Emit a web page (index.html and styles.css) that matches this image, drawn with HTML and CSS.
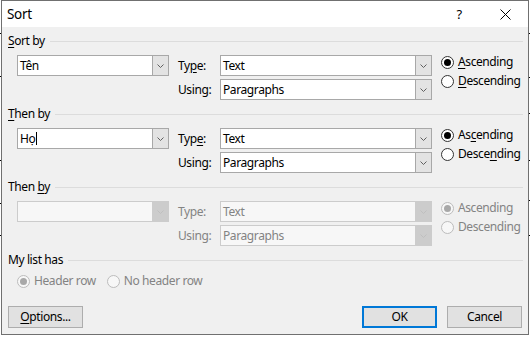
FILE: index.html
```html
<!DOCTYPE html>
<html lang="en">
<head>
<meta charset="utf-8">
<title>Sort</title>
<link rel="stylesheet" href="styles.css">
</head>
<body>
<div class="dialog">
  <div class="titlebar">
    <span class="title">Sort</span>
    <span class="cap-btn help">?</span>
    <span class="cap-btn close">
      <svg width="11" height="11" viewBox="0 0 11 11"><path d="M0.5 0.5 L10.5 10.5 M10.5 0.5 L0.5 10.5" stroke="#000" stroke-width="1" fill="none"/></svg>
    </span>
  </div>
  <div class="body">
    <section class="group">
      <div class="group-head"><span><u>S</u>ort by</span><i class="rule"></i></div>
      <div class="group-row">
        <div class="combo key"><span class="val">Tên</span><span class="drop"><svg width="7" height="4" viewBox="0 0 7 4"><path d="M0.5 0.5 L3.5 3.5 L6.5 0.5" fill="none" stroke="#606060"/></svg></span></div>
        <span class="lbl r1">Ty<u>p</u>e:</span>
        <div class="combo c1"><span class="val">Text</span><span class="drop"><svg width="7" height="4" viewBox="0 0 7 4"><path d="M0.5 0.5 L3.5 3.5 L6.5 0.5" fill="none" stroke="#606060"/></svg></span></div>
        <span class="lbl r2">Using:</span>
        <div class="combo c2"><span class="val">Paragraphs</span><span class="drop"><svg width="7" height="4" viewBox="0 0 7 4"><path d="M0.5 0.5 L3.5 3.5 L6.5 0.5" fill="none" stroke="#606060"/></svg></span></div>
        <div class="radios">
          <label class="radio"><span class="dot on"></span><span><u>A</u>scending</span></label>
          <label class="radio"><span class="dot"></span><span><u>D</u>escending</span></label>
        </div>
      </div>
    </section>
    <section class="group">
      <div class="group-head"><span><u>T</u>hen by</span><i class="rule"></i></div>
      <div class="group-row">
        <div class="combo key"><span class="val">Họ<i class="caret"></i></span><span class="drop"><svg width="7" height="4" viewBox="0 0 7 4"><path d="M0.5 0.5 L3.5 3.5 L6.5 0.5" fill="none" stroke="#606060"/></svg></span></div>
        <span class="lbl r1">Typ<u>e</u>:</span>
        <div class="combo c1"><span class="val">Text</span><span class="drop"><svg width="7" height="4" viewBox="0 0 7 4"><path d="M0.5 0.5 L3.5 3.5 L6.5 0.5" fill="none" stroke="#606060"/></svg></span></div>
        <span class="lbl r2">Using:</span>
        <div class="combo c2"><span class="val">Paragraphs</span><span class="drop"><svg width="7" height="4" viewBox="0 0 7 4"><path d="M0.5 0.5 L3.5 3.5 L6.5 0.5" fill="none" stroke="#606060"/></svg></span></div>
        <div class="radios">
          <label class="radio"><span class="dot on"></span><span>As<u>c</u>ending</span></label>
          <label class="radio"><span class="dot"></span><span>Desce<u>n</u>ding</span></label>
        </div>
      </div>
    </section>
    <section class="group disabled">
      <div class="group-head"><span class="head-on">Then <u>b</u>y</span><i class="rule"></i></div>
      <div class="group-row">
        <div class="combo key"><span class="val"></span><span class="drop"><svg width="7" height="4" viewBox="0 0 7 4"><path d="M0.5 0.5 L3.5 3.5 L6.5 0.5" fill="none" stroke="#bfbfbf"/></svg></span></div>
        <span class="lbl r1">Type:</span>
        <div class="combo c1"><span class="val">Text</span><span class="drop"><svg width="7" height="4" viewBox="0 0 7 4"><path d="M0.5 0.5 L3.5 3.5 L6.5 0.5" fill="none" stroke="#bfbfbf"/></svg></span></div>
        <span class="lbl r2">Using:</span>
        <div class="combo c2"><span class="val">Paragraphs</span><span class="drop"><svg width="7" height="4" viewBox="0 0 7 4"><path d="M0.5 0.5 L3.5 3.5 L6.5 0.5" fill="none" stroke="#bfbfbf"/></svg></span></div>
        <div class="radios">
          <label class="radio"><span class="dot on"></span><span>Ascending</span></label>
          <label class="radio"><span class="dot"></span><span>Descending</span></label>
        </div>
      </div>
    </section>
    <section class="listhas">
      <div class="group-head"><span>My list has</span><i class="rule"></i></div>
      <div class="hdr-radios disabled">
        <label class="radio"><span class="dot on"></span><span>Header row</span></label>
        <label class="radio"><span class="dot"></span><span>No header row</span></label>
      </div>
    </section>
    <div class="buttons">
      <button class="push"><u>O</u>ptions...</button>
      <span class="spacer"></span>
      <button class="push default">OK</button>
      <button class="push">Cancel</button>
    </div>
  </div>
</div>
<div class="marks">
  <i class="mk l1"></i><i class="mk l2"></i><i class="mk l3"></i><i class="mk l4"></i><i class="mk l5"></i>
  <i class="mk r1m"></i><i class="mk r2m"></i><i class="mk r3m"></i><i class="mk r4m"></i><i class="mk r5m"></i><i class="mk r6m"></i>
</div>
</body>
</html>
```
FILE: styles.css
```css
* { box-sizing: border-box; }
html, body { margin: 0; padding: 0; }
body {
  width: 530px;
  height: 339px;
  overflow: hidden;
  position: relative;
  background: #fff;
  font-family: "Noto Sans", "Segoe UI", sans-serif;
  font-size: 12px;
  letter-spacing: -0.4px;
  color: #000;
}
u { text-decoration-thickness: 1px; text-underline-offset: 2px; }

.dialog {
  margin-left: 1px;
  width: 528px;
  height: 335px;
  border: 1px solid #707070;
  background: #f0f0f0;
  display: flex;
  flex-direction: column;
}
.titlebar {
  height: 26px;
  flex: none;
  background: #fff;
  display: flex;
  align-items: center;
  padding-left: 5px;
}
.title { flex: 1; font-size: 13.5px; letter-spacing: -0.3px; }
.cap-btn {
  width: 46px;
  height: 26px;
  display: flex;
  align-items: center;
  justify-content: center;
}
.help { font-size: 13px; margin-right: 0; }
.close svg { display: block; }

.body {
  flex: 1;
  padding: 6px 5px 6px 6px;
  display: flex;
  flex-direction: column;
}
.group { padding-bottom: 6px; }
.group-head {
  height: 16px;
  display: flex;
  align-items: center;
  line-height: 16px;
}
.rule { flex: 1; height: 1px; background: #dcdcdc; margin-left: 5px; }

.group-row {
  margin-top: 6px;
  padding-left: 9px;
  display: grid;
  grid-template-columns: 152px 33px 212px auto;
  grid-template-rows: 21px 21px;
  column-gap: 9px;
  row-gap: 3px;
}
.key { grid-column: 1; grid-row: 1; }
.lbl { grid-column: 2; align-self: center; line-height: 16px; }
.lbl.r1 { grid-row: 1; }
.lbl.r2 { grid-row: 2; }
.c1 { grid-column: 3; grid-row: 1; }
.c2 { grid-column: 3; grid-row: 2; }
.radios {
  grid-column: 4;
  grid-row: 1 / span 2;
  display: flex;
  flex-direction: column;
  gap: 5px;
}

.combo {
  display: flex;
  height: 21px;
  border: 1px solid #a8a8a8;
  background: #fff;
}
.combo .val {
  flex: 1;
  padding-left: 2px;
  line-height: 19px;
  white-space: nowrap;
  overflow: hidden;
  display: flex;
  align-items: center;
}
.combo .drop {
  width: 16px;
  flex: none;
  background: #e3e3e3;
  border-left: 1px solid #a8a8a8;
  display: flex;
  align-items: center;
  justify-content: center;
}
.combo .drop svg { display: block; }
.caret { display: inline-block; width: 1px; height: 13px; background: #000; margin-left: 1px; }

.radio {
  display: flex;
  align-items: center;
  gap: 4px;
  height: 14px;
  line-height: 14px;
  white-space: nowrap;
}
.dot {
  width: 13px;
  height: 13px;
  border: 1px solid #333;
  border-radius: 50%;
  background: #fff;
  display: flex;
  align-items: center;
  justify-content: center;
  flex: none;
}
.dot.on::after {
  content: "";
  width: 7px;
  height: 7px;
  border-radius: 50%;
  background: #000;
}

.disabled .group-row,
.disabled.hdr-radios { color: #838383; }
.disabled .combo { border-color: #cccccc; background: #f7f7f7; }
.disabled .combo .drop { background: #cccccc; border-left-color: #cccccc; }
.disabled .dot { border-color: #bcbcbc; background: #f7f7f7; }
.disabled .dot.on::after { background: #a8a8a8; }

.listhas { display: flex; flex-direction: column; }
.hdr-radios {
  margin-top: 6px;
  padding-left: 9px;
  display: flex;
  gap: 11px;
}

.buttons {
  margin-top: 18px;
  display: flex;
  gap: 10px;
  padding-right: 1px;
}
.spacer { flex: 1; }
.push {
  width: 75px;
  height: 22px;
  border: 1px solid #adadad;
  background: #e1e1e1;
  font: inherit;
  letter-spacing: inherit;
  color: #000;
  padding: 0;
  line-height: 18px;
}
.push.default { border: 2px solid #0078d7; }

.marks { position: absolute; inset: 0; pointer-events: none; }
.mk { position: absolute; width: 1px; height: 1px; background: #000; }
.l1 { left: 0; top: 33px; }
.l2 { left: 0; top: 76px; }
.l3 { left: 0; top: 160px; }
.l4 { left: 0; top: 203px; }
.l5 { left: 0; top: 235px; }
.r1m { left: 529px; top: 33px; }
.r2m { left: 529px; top: 77px; }
.r3m { left: 529px; top: 113px; }
.r4m { left: 529px; top: 160px; }
.r5m { left: 529px; top: 200px; }
.r6m { left: 529px; top: 235px; }
```
